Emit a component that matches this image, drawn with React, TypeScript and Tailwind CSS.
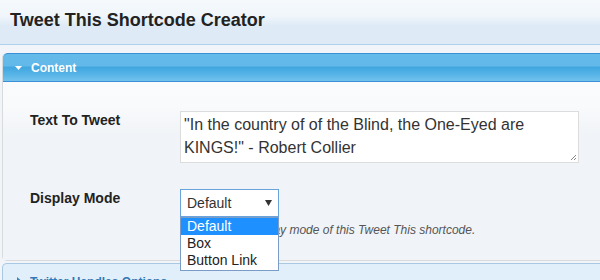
export default function App() {
  const options = ['Default', 'Box', 'Button Link']

  return (
    <main className="h-[280px] w-[600px] overflow-hidden bg-[#f1f4f8] font-['Liberation_Sans',Arial,sans-serif]">
      {/* page title */}
      <header className="h-[45px] border-b border-[#aed0f0] bg-[linear-gradient(#f5f9fc_0%,#f1f6fb_35%,#deebf6_58%,#deebf6_100%)] pl-[10px] pt-[9px]">
        <h1 className="text-[18px] font-bold leading-[22px] text-[#222]">Tweet This Shortcode Creator</h1>
      </header>

      <div className="h-[8px]" />

      {/* content panel */}
      <section className="ml-[2px] rounded-bl-[5px] rounded-tl-[5px] border-b border-l border-[#d9dadc]">
        <div className="flex h-[29px] items-center gap-[9px] rounded-tl-[5px] border-y border-[#3a8fd6] bg-[linear-gradient(#64bae9_0%,#62b8e8_45%,#3fa6e0_48%,#5bb6e8_80%,#74c2ec_100%)] pl-[12px]">
          <svg width="7" height="4" viewBox="0 0 7 4" className="mt-[1px]">
            <path d="M0 0h7L3.5 4z" fill="#fff" />
          </svg>
          <span className="text-[12px] font-bold text-white">Content</span>
        </div>

        <div className="relative h-[178px] bg-[linear-gradient(#f9fbfc_0%,#f8fafc_25px,#f0f3f7_55px,#f0f3f7_100%)] pt-[29px]">
          <div className="flex items-start">
            <label className="w-[177px] pl-[27px] pt-[1px] text-[14px] font-bold leading-[16px] text-[#222]">
              Text To Tweet
            </label>
            <div className="relative h-[52px] w-[399px] border border-[#dcdcdc] bg-white pl-[3px] pt-[1px] text-[16px] leading-[23px] text-[#333]">
              "In the country of of the Blind, the One-Eyed are
              <br />
              KINGS!" - Robert Collier
              <svg width="7" height="7" viewBox="0 0 7 7" className="absolute bottom-[1px] right-[1px]">
                <path d="M6 1L1 6M6 4L4 6" stroke="#888" strokeWidth="1" />
              </svg>
            </div>
          </div>

          <div className="mt-[26px] flex items-start">
            <label className="w-[177px] pl-[27px] pt-[1px] text-[14px] font-bold leading-[16px] text-[#222]">
              Display Mode
            </label>
            <div className="relative">
              <div className="flex h-[28px] w-[99px] items-center justify-between border border-[#6aa3dc] bg-white pl-[6px] pr-[6px] text-[14px] text-[#333]">
                <span>Default</span>
                <svg width="7" height="6" viewBox="0 0 7 6">
                  <path d="M0 0h7L3.5 6z" fill="#333" />
                </svg>
              </div>
              <p className="ml-[4px] mt-[6px] whitespace-nowrap text-[12px] italic leading-[14px] text-[#555]">
                Choose the display mode of this Tweet This shortcode.
              </p>

              {/* open dropdown list */}
              <ul className="absolute left-0 top-[28px] w-[99px] border border-[#7a9cc6] bg-white pb-[1px] text-[14px] leading-[17px] text-[#222]">
                {options.map((opt, i) => (
                  <li
                    key={opt}
                    className={i === 0 ? 'bg-[#1e90ff] pl-[6px] text-white' : 'pl-[6px]'}
                  >
                    {opt}
                  </li>
                ))}
              </ul>
            </div>
          </div>
        </div>
      </section>

      <div className="h-[2px]" />

      {/* collapsed panel */}
      <section className="ml-[2px] rounded-tl-[5px] border-l border-t border-[#a9c8e2] bg-[#e1effa]">
        <div className="flex h-[29px] items-center gap-[9px] pl-[14px]">
          <svg width="4" height="7" viewBox="0 0 4 7" className="mt-[4px]">
            <path d="M0 0v7l4-3.5z" fill="#3a7fb8" />
          </svg>
          <span className="mt-[6px] text-[12px] font-bold text-[#3478b4]">Twitter Handles Options</span>
        </div>
      </section>
    </main>
  )
}
